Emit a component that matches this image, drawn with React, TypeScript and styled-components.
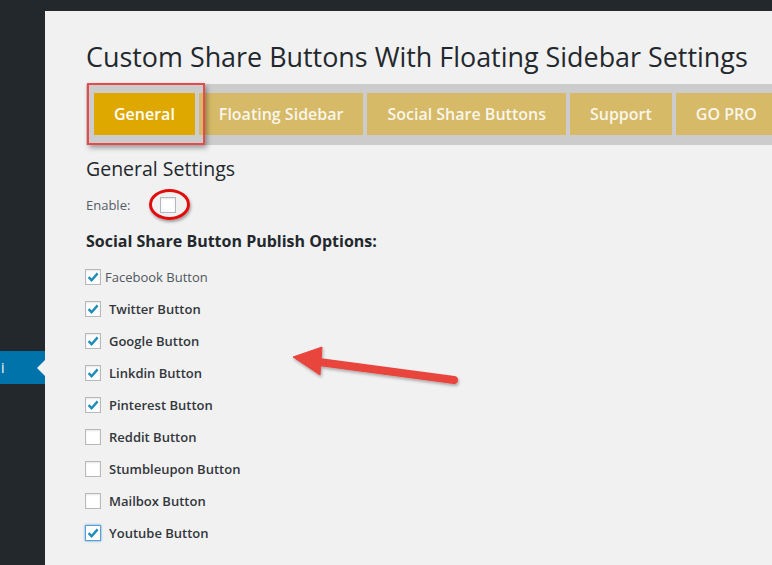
import styled, { createGlobalStyle } from "styled-components";

const GlobalStyle = createGlobalStyle`
  html, body {
    margin: 0;
    padding: 0;
    background: #f1f1f1;
    font-family: "Open Sans", "Noto Sans", sans-serif;
    overflow: hidden;
  }
`;

const Page = styled.div`
  width: 772px;
  height: 565px;
  display: flex;
  flex-direction: column;
  overflow: hidden;
`;

const TopBar = styled.div`
  height: 11px;
  flex: none;
  background: #23282d;
`;

const Body = styled.div`
  flex: 1;
  display: flex;
`;

const Sidebar = styled.div`
  width: 45px;
  flex: none;
  background: #23282d;
  display: flex;
  flex-direction: column;
  padding-top: 340px;
`;

const MenuItem = styled.div`
  position: relative;
  height: 33px;
  background: #0073aa;
  color: #fff;
  font-size: 14px;
  line-height: 33px;
  padding-left: 1px;
  overflow: hidden;

  &::after {
    content: "";
    position: absolute;
    right: 0;
    top: 9px;
    border-style: solid;
    border-width: 8px 8px 8px 0;
    border-color: transparent #f1f1f1 transparent transparent;
  }
`;

const Content = styled.div`
  position: relative;
  flex: 1;
  padding: 29px 0 0 41px;
  color: #23282d;
`;

const Title = styled.h1`
  margin: 0;
  font-size: 26.9px;
  line-height: 34px;
  font-weight: 400;
  color: #23282d;
  white-space: nowrap;
`;

const TabBar = styled.div`
  position: relative;
  margin-top: 10px;
  height: 61px;
  box-sizing: border-box;
  padding: 9px 0 10px 8px;
  background: #cccccc;
  display: flex;
  gap: 4px;
  margin-right: -8px;
`;

const Tab = styled.div<{ $active?: boolean }>`
  height: 42px;
  line-height: 42px;
  padding: 0 20px;
  flex: none;
  font-size: 16px;
  font-weight: 600;
  white-space: nowrap;
  color: ${(p) => (p.$active ? "#ffffff" : "rgba(255,255,255,0.88)")};
  background: ${(p) => (p.$active ? "#dea800" : "#d6ba68")};
`;

const TabHighlight = styled.div`
  position: absolute;
  left: 1px;
  top: -1px;
  width: 118px;
  height: 62px;
  box-sizing: border-box;
  border: 2px solid #e84a4a;
  box-shadow: 2px 3px 5px rgba(0, 0, 0, 0.35);
  pointer-events: none;
`;

const SectionTitle = styled.h2`
  margin: 10px 0 0;
  font-size: 19.5px;
  line-height: 28px;
  font-weight: 400;
  color: #23282d;
`;

const EnableRow = styled.div`
  margin-top: 14px;
  display: flex;
  align-items: center;
  height: 16px;
`;

const EnableLabel = styled.span`
  width: 74px;
  font-size: 13px;
  line-height: 16px;
  color: #555d66;
`;

const CheckWrap = styled.span`
  position: relative;
  display: inline-flex;
`;

const RedCircle = styled.span`
  position: absolute;
  left: -11px;
  top: -8px;
  width: 41px;
  height: 31px;
  box-sizing: border-box;
  border: 3px solid #e00d0d;
  border-radius: 50%;
  box-shadow: 1px 2px 3px rgba(0, 0, 0, 0.35);
`;

const OptionsTitle = styled.h3`
  margin: 17px 0 0;
  font-size: 16px;
  line-height: 22px;
  font-weight: 700;
  color: #23282d;
`;

const OptionList = styled.div`
  margin-top: 17px;
  margin-left: -1px;
  display: flex;
  flex-direction: column;
  gap: 16px;
`;

const Option = styled.label<{ $plain?: boolean }>`
  display: flex;
  align-items: center;
  height: 16px;
  gap: ${(p) => (p.$plain ? "4px" : "8px")};
  font-size: 13px;
  line-height: 16px;
  font-weight: ${(p) => (p.$plain ? 400 : 600)};
  color: ${(p) => (p.$plain ? "#50575e" : "#32373c")};
`;

const Box = styled.span<{ $focus?: boolean }>`
  width: 16px;
  height: 16px;
  box-sizing: border-box;
  flex: none;
  background: #fff;
  border: 1px solid ${(p) => (p.$focus ? "#5b9dd9" : "#b4b9be")};
  box-shadow: ${(p) =>
    p.$focus
      ? "0 0 2px rgba(30, 140, 190, 0.8)"
      : "inset 0 1px 2px rgba(0, 0, 0, 0.1)"};
  display: flex;
  align-items: center;
  justify-content: center;
`;

const Arrow = styled.svg`
  position: absolute;
  left: 240px;
  top: 330px;
  overflow: visible;
`;

const Checkbox = ({ checked, focus }: { checked?: boolean; focus?: boolean }) => (
  <Box $focus={focus}>
    {checked && (
      <svg width="12" height="12" viewBox="0 0 12 12">
        <path d="M1.6 6.2 L4.6 9.2 L10.6 2.4" fill="none" stroke="#1e8cbe" strokeWidth="2.4" />
      </svg>
    )}
  </Box>
);

const options = [
  { label: "Facebook Button", checked: true, plain: true },
  { label: "Twitter Button", checked: true },
  { label: "Google Button", checked: true },
  { label: "Linkdin Button", checked: true },
  { label: "Pinterest Button", checked: true },
  { label: "Reddit Button", checked: false },
  { label: "Stumbleupon Button", checked: false },
  { label: "Mailbox Button", checked: false },
  { label: "Youtube Button", checked: true, focus: true },
];

const tabs = ["General", "Floating Sidebar", "Social Share Buttons", "Support", "GO PRO"];

export default function App() {
  return (
    <Page>
      <GlobalStyle />
      <TopBar />
      <Body>
        <Sidebar>
          <MenuItem>i</MenuItem>
        </Sidebar>
        <Content>
          <Title>Custom Share Buttons With Floating Sidebar Settings</Title>
          <TabBar>
            {tabs.map((t, i) => (
              <Tab key={t} $active={i === 0}>
                {t}
              </Tab>
            ))}
            <TabHighlight />
          </TabBar>
          <SectionTitle>General Settings</SectionTitle>
          <EnableRow>
            <EnableLabel>Enable:</EnableLabel>
            <CheckWrap>
              <Checkbox />
              <RedCircle />
            </CheckWrap>
          </EnableRow>
          <OptionsTitle>Social Share Button Publish Options:</OptionsTitle>
          <OptionList>
            {options.map((o) => (
              <Option key={o.label} $plain={o.plain}>
                <Checkbox checked={o.checked} focus={o.focus} />
                {o.label}
              </Option>
            ))}
          </OptionList>
          <Arrow width="185" height="60" viewBox="0 0 185 60">
            <defs>
              <filter id="arrowShadow" x="-10%" y="-30%" width="130%" height="180%">
                <feDropShadow dx="1" dy="2" stdDeviation="1.5" floodColor="#000" floodOpacity="0.3" />
              </filter>
            </defs>
            <g filter="url(#arrowShadow)" fill="#e8443d" stroke="#e8443d">
              <line x1="34" y1="21" x2="169" y2="39" strokeWidth="8" strokeLinecap="round" />
              <polygon points="8,16 37,6 35,34" strokeWidth="1" strokeLinejoin="round" />
            </g>
          </Arrow>
        </Content>
      </Body>
    </Page>
  );
}
